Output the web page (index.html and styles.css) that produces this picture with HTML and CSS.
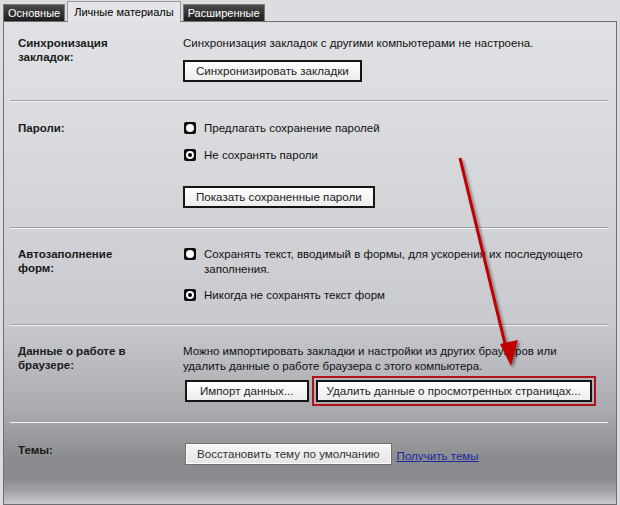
FILE: index.html
```html
<!DOCTYPE html>
<html>
<head>
<meta charset="utf-8">
<link rel="stylesheet" href="styles.css">
</head>
<body>
<div class="window">
  <div class="tabs">
    <div class="tab dark">Основные</div>
    <div class="tab active">Личные материалы</div>
    <div class="tab dark">Расширенные</div>
  </div>
  <div class="panel">
    <div class="section s1">
      <div class="label">Синхронизация<br>закладок:</div>
      <div class="content">
        <div class="text">Синхронизация закладок с другими компьютерами не настроена.</div>
        <div class="btn-row mt9"><span class="btn">Синхронизировать закладки</span></div>
      </div>
    </div>
    <div class="sep"></div>
    <div class="section s2">
      <div class="label">Пароли:</div>
      <div class="content">
        <div class="radio-row"><span class="radio"></span><span class="text">Предлагать сохранение паролей</span></div>
        <div class="radio-row mt12"><span class="radio checked"></span><span class="text">Не сохранять пароли</span></div>
        <div class="btn-row mt23"><span class="btn">Показать сохраненные пароли</span></div>
      </div>
    </div>
    <div class="sep"></div>
    <div class="section s3">
      <div class="label">Автозаполнение<br>форм:</div>
      <div class="content">
        <div class="radio-row"><span class="radio"></span><span class="text">Сохранять текст, вводимый в формы, для ускорения их последующего<br>заполнения.</span></div>
        <div class="radio-row mt11"><span class="radio checked"></span><span class="text">Никогда не сохранять текст форм</span></div>
      </div>
    </div>
    <div class="sep"></div>
    <div class="section s4">
      <div class="label">Данные о работе в<br>браузере:</div>
      <div class="content">
        <div class="text">Можно импортировать закладки и настройки из других браузеров или<br>удалить данные о работе браузера с этого компьютера.</div>
        <div class="btn-row mt6">
          <span class="btn first">Импорт данных...</span>
          <span class="highlight"><span class="btn">Удалить данные о просмотренных страницах...</span></span>
        </div>
      </div>
    </div>
    <div class="sep light"></div>
    <div class="section s5">
      <div class="label">Темы:</div>
      <div class="content row">
        <span class="btn soft">Восстановить тему по умолчанию</span>
        <a class="link" href="#">Получить темы</a>
      </div>
    </div>
  </div>
  <svg class="arrow" width="620" height="505" viewBox="0 0 620 505">
    <defs>
      <filter id="sh" x="-50%" y="-50%" width="200%" height="200%">
        <feGaussianBlur in="SourceAlpha" stdDeviation="1.5"/>
        <feOffset dx="2" dy="2"/>
        <feComponentTransfer><feFuncA type="linear" slope="0.45"/></feComponentTransfer>
        <feMerge><feMergeNode/><feMergeNode in="SourceGraphic"/></feMerge>
      </filter>
    </defs>
    <g filter="url(#sh)">
      <line x1="460" y1="158" x2="506" y2="348" stroke="#c00000" stroke-width="3"/>
      <polygon points="500,344 518,340 511,366" fill="#c00000"/>
    </g>
  </svg>
</div>
</body>
</html>
```

FILE: styles.css
```css
* { box-sizing: border-box; }
html, body { margin: 0; padding: 0; }
body { background: #dcdde0; font-family: "Liberation Sans", Arial, sans-serif; font-size: 11.5px; color: #111; }
.window { position: relative; width: 620px; height: 505px; overflow: hidden; background: #dcdde0; }
.tabs { display: flex; align-items: flex-end; height: 21px; padding-left: 3px; gap: 1px; }
.tab { height: 17px; line-height: 16px; padding: 0 4px; font-size: 11px; }
.tab.dark { background: linear-gradient(#4a4a4a, #1e1e1e); color: #fff; border: 1px solid #777; border-bottom: none; }
.tab.active { height: 21px; line-height: 20px; background: #e4e5e8; color: #000; border: 1px solid #9a9a9e; border-bottom: none; padding: 0 6px; margin: 0 1px 0 1px; position: relative; top: 1px; }
.panel { margin: 0 3px; height: 484px; border: 1px solid #6e6f73; background: linear-gradient(#e0e1e4 0px, #d9dadd 120px, #c9cacf 300px, #a9aaae 390px, #8b8c8f 438px, #88898c 455px, #a4a5a8 470px, #cbccd0 482px); }
.section { display: grid; grid-template-columns: 165px 1fr; padding-left: 14px; }
.label { font-weight: bold; line-height: 14px; font-size: 11.5px; color: #1a1a1a; }
.content { line-height: 14px; }
.text { line-height: 15px; }
.s1 { height: 78px; padding-top: 14px; }
.s2 { height: 125px; padding-top: 19px; }
.s3 { height: 95px; padding-top: 18px; }
.s4 { height: 96px; padding-top: 18px; }
.s5 { padding-top: 19px; }
.sep { height: 2px; margin: 0 8px 0 6px; border-top: 1px solid #9fa0a4; border-bottom: 1px solid #f4f4f6; }
.sep.light { border-top: 1px solid #f2f2f4; border-bottom: 1px solid #a8a9ad; }
.mt6 { margin-top: 6px; }
.mt9 { margin-top: 9px; }
.mt11 { margin-top: 11px; }
.mt12 { margin-top: 12px; }
.mt23 { margin-top: 23px; }
.btn-row { display: flex; align-items: center; gap: 3px; }
.btn { display: inline-block; height: 22px; line-height: 18px; padding: 0 11px; border: 2px solid #151515; background: linear-gradient(#ffffff, #ececec); color: #222; font-size: 11.6px; white-space: nowrap; }
.btn.first { margin-left: 2px; padding: 0 13px; }
.btn.soft { border: 1px solid #707070; box-shadow: inset 0 0 0 1px #fff; line-height: 20px; background: linear-gradient(#f6f6f6, #e4e4e4); color: #333; padding: 0 11px; }
.highlight { display: inline-block; padding: 2px; border: 2px solid #b4101c; margin-left: 0; margin-top: -4px; margin-bottom: -4px; }
.highlight .btn { padding: 0 9px; }
.radio-row { display: flex; align-items: flex-start; }
.radio { flex: none; width: 12px; height: 12px; background: #0c0c0c; border-radius: 2px; margin: 1px 8px 0 1px; position: relative; }
.radio::after { content: ""; position: absolute; left: 2px; top: 2px; width: 8px; height: 8px; border-radius: 50%; background: #fff; }
.radio.checked::before { content: ""; position: absolute; left: 4px; top: 4px; width: 4px; height: 4px; border-radius: 50%; background: #000; z-index: 1; }
.row { display: flex; align-items: center; gap: 5px; padding-left: 2px; }
.link { color: #1c2a9c; text-decoration: underline; font-size: 11.6px; margin-top: 3px; }
.arrow { position: absolute; left: 0; top: 0; pointer-events: none; }
```
